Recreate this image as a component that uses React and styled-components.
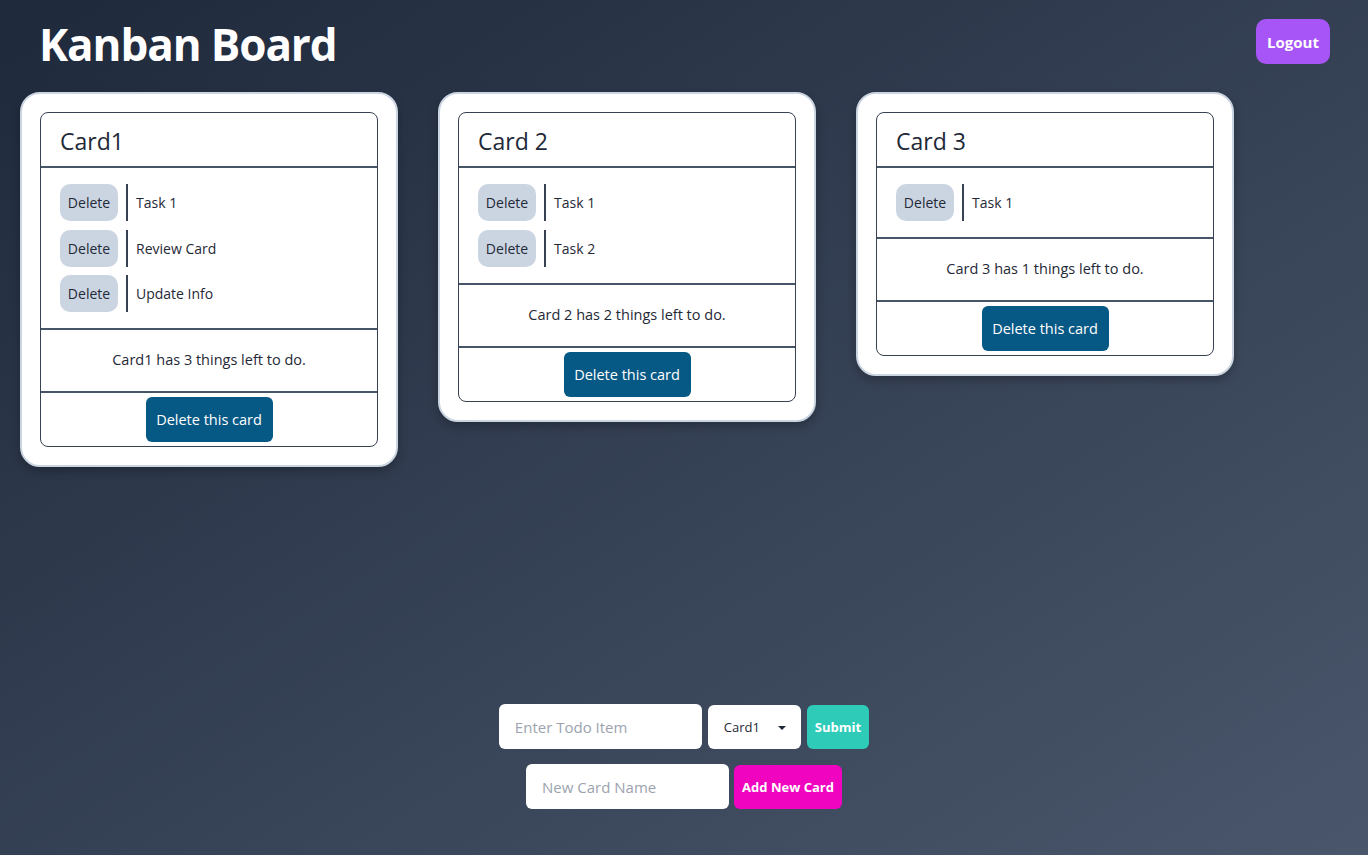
import React from 'react';
import styled, { createGlobalStyle } from 'styled-components';

const GlobalStyle = createGlobalStyle`
  * { box-sizing: border-box; }
  html, body { margin: 0; padding: 0; }
  body {
    font-family: 'Segoe UI', 'Open Sans', sans-serif;
    color: #1f2937;
  }
`

const cards = [
  { name: 'Card1', tasks: ['Task 1', 'Review Card', 'Update Info'] },
  { name: 'Card 2', tasks: ['Task 1', 'Task 2'] },
  { name: 'Card 3', tasks: ['Task 1'] },
];

const Card = ({ card }) => (
  <CardOuter>
    <CardInner>
      <CardTitle>{card.name}</CardTitle>
      <TaskList>
        {card.tasks.map((t, i) => (
          <TaskRow key={i}>
            <SmallDelete>Delete</SmallDelete>
            <TaskText>{t}</TaskText>
          </TaskRow>
        ))}
      </TaskList>
      <Summary>{card.name} has {card.tasks.length} things left to do.</Summary>
      <CardFooter>
        <DeleteCard>Delete this card</DeleteCard>
      </CardFooter>
    </CardInner>
  </CardOuter>
);

const App = () => {
  return (
    <Page>
      <GlobalStyle />
      <Header>
        <Title>Kanban Board</Title>
        <Logout>Logout</Logout>
      </Header>
      <Board>
        {cards.map((c) => <Card key={c.name} card={c} />)}
      </Board>
      <Form>
        <FormRow>
          <TextInput placeholder="Enter Todo Item" />
          <SelectWrap>
            <Select defaultValue="Card1">
              {cards.map((c) => <option key={c.name}>{c.name}</option>)}
            </Select>
            <Caret />
          </SelectWrap>
          <ActionButton $bg="#2ecbb9">Submit</ActionButton>
        </FormRow>
        <FormRow $gap="5px">
          <TextInput placeholder="New Card Name" />
          <ActionButton $bg="#f004c0">Add New Card</ActionButton>
        </FormRow>
      </Form>
    </Page>
  )
}

export default App;

const Page = styled.div`
  min-height: 100vh;
  height: 855px;
  display: flex;
  flex-direction: column;
  background: linear-gradient(to bottom right, #1e293b, #4a566b);
  padding-bottom: 46px;
`

const Header = styled.header`
  display: flex;
  justify-content: space-between;
  align-items: flex-start;
  padding: 12px 38px 0 39px;
  height: 92px;
`

const Title = styled.h1`
  margin: 0;
  font-size: 44px;
  line-height: 64px;
  font-weight: 700;
  color: #ffffff;
  letter-spacing: -1.1px;
`

const Logout = styled.button`
  margin-top: 7px;
  width: 74px;
  height: 45px;
  border: none;
  border-radius: 10px;
  background: #a855f7;
  color: #fff;
  font-family: inherit;
  font-weight: 700;
  font-size: 15px;
`

const Board = styled.main`
  flex: 1;
  display: flex;
  align-items: flex-start;
  gap: 40px;
  padding-left: 20px;
`

const CardOuter = styled.section`
  width: 378px;
  padding: 18px;
  background: #fff;
  border: 2px solid #cbd5e1;
  border-radius: 20px;
  box-shadow: 0 4px 10px rgba(0, 0, 0, 0.25);
`

const CardInner = styled.div`
  border: 1px solid #374151;
  border-radius: 8px;
  overflow: hidden;
`

const CardTitle = styled.h2`
  margin: 0;
  padding: 14px 19px 10px;
  font-size: 23px;
  line-height: 29px;
  font-weight: 400;
  color: #1f2937;
  border-bottom: 2px solid #475569;
`

const TaskList = styled.ul`
  list-style: none;
  margin: 0;
  padding: 16px 19px 16px;
  display: flex;
  flex-direction: column;
  gap: 8.5px;
  border-bottom: 2px solid #475569;
`

const TaskRow = styled.li`
  display: flex;
  align-items: stretch;
  height: 37px;
`

const SmallDelete = styled.button`
  width: 58px;
  border: none;
  border-radius: 10px;
  background: #cbd5e1;
  color: #1f2937;
  font-family: inherit;
  font-size: 14px;
  padding: 0;
`

const TaskText = styled.span`
  display: flex;
  align-items: center;
  margin-left: 8px;
  padding-left: 8px;
  border-left: 2px solid #374151;
  font-size: 14px;
  color: #1f2937;
`

const Summary = styled.p`
  margin: 0;
  padding: 20px 20px 21px;
  text-align: center;
  font-size: 14.5px;
  line-height: 20px;
  color: #1f2937;
  border-bottom: 2px solid #475569;
`

const CardFooter = styled.div`
  display: flex;
  justify-content: center;
  padding: 4px 0;
`

const DeleteCard = styled.button`
  width: 127px;
  height: 45px;
  border: none;
  border-radius: 6px;
  background: #075985;
  color: #fff;
  font-family: inherit;
  font-size: 14.5px;
  padding: 0;
`

const Form = styled.form`
  display: flex;
  flex-direction: column;
  align-items: center;
  gap: 15px;
`

const FormRow = styled.div`
  display: flex;
  align-items: center;
  gap: ${(p) => p.$gap || '6px'};
`

const TextInput = styled.input`
  width: 203px;
  height: 45px;
  border: none;
  border-radius: 6px;
  padding: 0 16px;
  font-family: inherit;
  font-size: 15px;
  color: #1f2937;
  background: #fff;
  outline: none;
  &::placeholder { color: #9ca3af; }
`

const SelectWrap = styled.div`
  position: relative;
  width: 93px;
  height: 44px;
`

const Select = styled.select`
  appearance: none;
  width: 100%;
  height: 100%;
  border: none;
  border-radius: 6px;
  background: #fff;
  padding: 0 16px;
  font-family: inherit;
  font-size: 13px;
  color: #1f2937;
  outline: none;
`

const Caret = styled.span`
  position: absolute;
  right: 15px;
  top: 21px;
  width: 0;
  height: 0;
  border-left: 4px solid transparent;
  border-right: 4px solid transparent;
  border-top: 4px solid #1f2937;
  pointer-events: none;
`

const ActionButton = styled.button`
  height: 44px;
  padding: 0 8px;
  border: none;
  border-radius: 6px;
  background: ${(p) => p.$bg};
  color: #fff;
  font-family: inherit;
  font-weight: 700;
  font-size: 13px;
`
